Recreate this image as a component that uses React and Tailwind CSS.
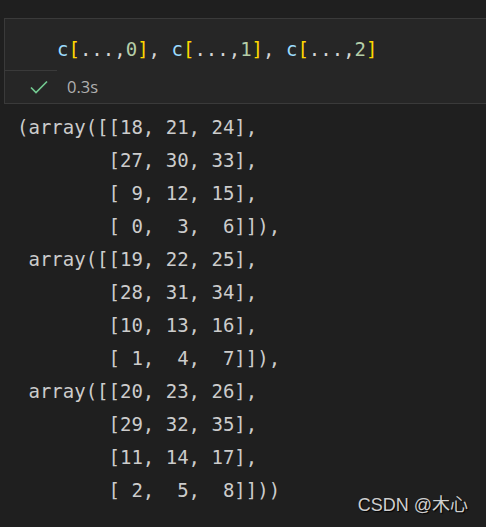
const mono = { fontFamily: '"DejaVu Sans Mono", "Liberation Mono", monospace' };

const output = `(array([[18, 21, 24],
        [27, 30, 33],
        [ 9, 12, 15],
        [ 0,  3,  6]]),
 array([[19, 22, 25],
        [28, 31, 34],
        [10, 13, 16],
        [ 1,  4,  7]]),
 array([[20, 23, 26],
        [29, 32, 35],
        [11, 14, 17],
        [ 2,  5,  8]]))`;

function Idx({ n }) {
  return (
    <>
      <span className="text-[#9cdcfe]">c</span>
      <span className="text-[#ffd700]">[</span>
      <span className="text-[#d4d4d4]">...,</span>
      <span className="text-[#b5cea8]">{n}</span>
      <span className="text-[#ffd700]">]</span>
    </>
  );
}

export default function App() {
  return (
    <div className="relative w-[486px] h-[527px] overflow-hidden bg-[#1f1f1f]">
      <div className="pt-[18px] pl-[4px]">
        <div className="border-y border-l border-[#3a3a3a] bg-[#262626] h-[86px]">
          <div className="pt-[14px] pl-[52px] text-[19px] leading-[33px] whitespace-pre" style={mono}>
            <Idx n="0" />
            <span className="text-[#d4d4d4]">, </span>
            <Idx n="1" />
            <span className="text-[#d4d4d4]">, </span>
            <Idx n="2" />
          </div>
          <div className="mt-[4px] w-[52px] h-px bg-[#3a3a3a]" />
          <div className="flex items-center h-[32px] pl-[25px]">
            <svg width="18" height="14" viewBox="0 0 18 14" fill="none">
              <path d="M1 7.5 L6 12.5 L17 1.5" stroke="#73c991" strokeWidth="1.7" />
            </svg>
            <span
              className="ml-[19px] text-[16.5px] text-[#b0b0b0]"
              style={{ fontFamily: '"Open Sans", "Noto Sans", sans-serif' }}
            >
              0.3s
            </span>
          </div>
        </div>
      </div>
      <pre
        className="mt-[7px] pl-[17px] text-[19px] leading-[33px] text-[#cccccc]"
        style={mono}
      >
        {output}
      </pre>
      <div
        className="absolute right-[18px] bottom-[8px] text-[18px] text-[#cfcfcf] [text-shadow:1px_1px_1px_#000]"
        style={{ fontFamily: '"Liberation Sans", "Noto Sans CJK SC", sans-serif' }}
      >
        CSDN @木心
      </div>
    </div>
  );
}
